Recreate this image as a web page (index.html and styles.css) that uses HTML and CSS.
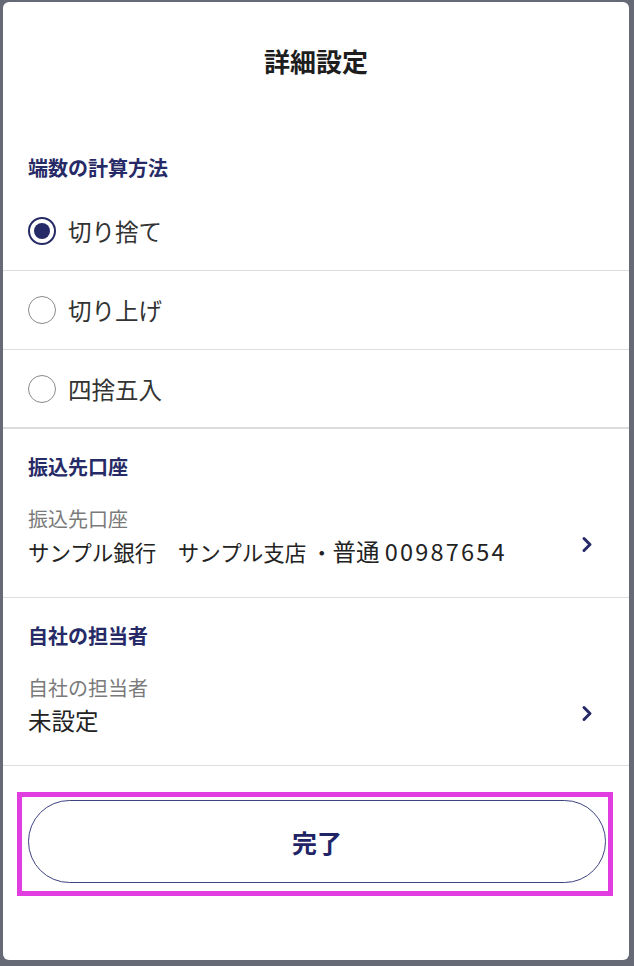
FILE: index.html
```html
<!DOCTYPE html>
<html lang="ja">
<head>
<meta charset="utf-8">
<title>詳細設定</title>
<link rel="stylesheet" href="styles.css">
</head>
<body>
<div class="card">
  <h1 class="title">詳細設定</h1>

  <section class="rounding">
    <h2 class="section-head">端数の計算方法</h2>
    <label class="radio-row">
      <span class="radio radio-on"></span>
      <span class="radio-text">切り捨て</span>
    </label>
    <label class="radio-row">
      <span class="radio"></span>
      <span class="radio-text">切り上げ</span>
    </label>
    <label class="radio-row radio-row-last">
      <span class="radio"></span>
      <span class="radio-text">四捨五入</span>
    </label>
  </section>

  <section class="field-section">
    <h2 class="section-head">振込先口座</h2>
    <div class="field-row">
      <div class="field">
        <div class="field-label">振込先口座</div>
        <div class="field-value"><span class="bank">サンプル銀行　サンプル支店 ・</span>普通 <span class="num">00987654</span></div>
      </div>
      <svg class="chevron" width="12" height="17" viewBox="0 0 12 17"><path d="M3 2.5 L9 8.5 L3 14.5" fill="none" stroke="#262a66" stroke-width="3" stroke-linecap="round" stroke-linejoin="round"/></svg>
    </div>
  </section>

  <section class="field-section">
    <h2 class="section-head">自社の担当者</h2>
    <div class="field-row">
      <div class="field">
        <div class="field-label">自社の担当者</div>
        <div class="field-value">未設定</div>
      </div>
      <svg class="chevron" width="12" height="17" viewBox="0 0 12 17"><path d="M3 2.5 L9 8.5 L3 14.5" fill="none" stroke="#262a66" stroke-width="3" stroke-linecap="round" stroke-linejoin="round"/></svg>
    </div>
  </section>

  <div class="btn-highlight">
    <button class="done-btn" type="button">完了</button>
  </div>
</div>
</body>
</html>
```

FILE: styles.css
```css
* { box-sizing: border-box; }

html, body {
  margin: 0;
  height: 100%;
}

body {
  background: #666a76;
  padding: 2px 5px 6px 3px;
  font-family: "Noto Sans CJK JP", "Noto Sans", sans-serif;
  color: #2b2b2b;
}

.card {
  background: #ffffff;
  height: 958px;
  border-radius: 6px;
  display: flex;
  flex-direction: column;
  overflow: hidden;
}

.title {
  margin: 0;
  padding-top: 42px;
  font-size: 26px;
  line-height: 34px;
  font-weight: 700;
  text-align: center;
  color: #1e1e1e;
}

.section-head {
  margin: 0;
  padding: 0 25px;
  font-size: 20px;
  line-height: 24px;
  font-weight: 700;
  color: #262a66;
}

.rounding {
  padding-top: 78px;
  display: flex;
  flex-direction: column;
}

.rounding .section-head {
  margin-bottom: 12px;
}

.radio-row {
  height: 79px;
  display: flex;
  align-items: center;
  gap: 12px;
  padding: 0 25px;
  border-bottom: 1px solid #dddddd;
}

.radio-row-last {
  border-bottom: 2px solid #dcdcdc;
}

.radio {
  width: 28px;
  height: 28px;
  border-radius: 50%;
  border: 1.5px solid #8a8a8a;
  flex: none;
  display: flex;
  align-items: center;
  justify-content: center;
}

.radio-on {
  border: 2.5px solid #262a66;
}

.radio-on::after {
  content: "";
  width: 16px;
  height: 16px;
  border-radius: 50%;
  background: #262a66;
}

.radio-text {
  font-size: 23.5px;
  line-height: 30px;
  color: #333333;
}

.field-section {
  padding: 26px 0 29px;
  border-bottom: 1px solid #dddddd;
}

.field-section .section-head {
  margin-bottom: 28px;
}

.field-row {
  display: flex;
  align-items: center;
  padding: 0 36px 0 25px;
}

.field {
  flex: 1;
}

.field-label {
  font-size: 20px;
  line-height: 24px;
  color: #7a7a7a;
}

.field-value {
  margin-top: 4px;
  font-size: 23.5px;
  line-height: 32px;
  color: #222222;
  white-space: nowrap;
}

.bank {
  font-size: 21.5px;
}

.num {
  letter-spacing: 2.2px;
}

.chevron {
  flex: none;
  margin-top: 14px;
}

.btn-highlight {
  margin: 26px 16px 0 14px;
  border: 5px solid #e03ee0;
  padding: 3px 2px 8px 6px;
}

.done-btn {
  display: block;
  width: 100%;
  height: 83px;
  border: 1.5px solid #3d4280;
  border-radius: 42px;
  background: #ffffff;
  font-family: "Noto Sans CJK JP", "Noto Sans", sans-serif;
  font-size: 25px;
  font-weight: 700;
  color: #1f2466;
  cursor: pointer;
}
```
